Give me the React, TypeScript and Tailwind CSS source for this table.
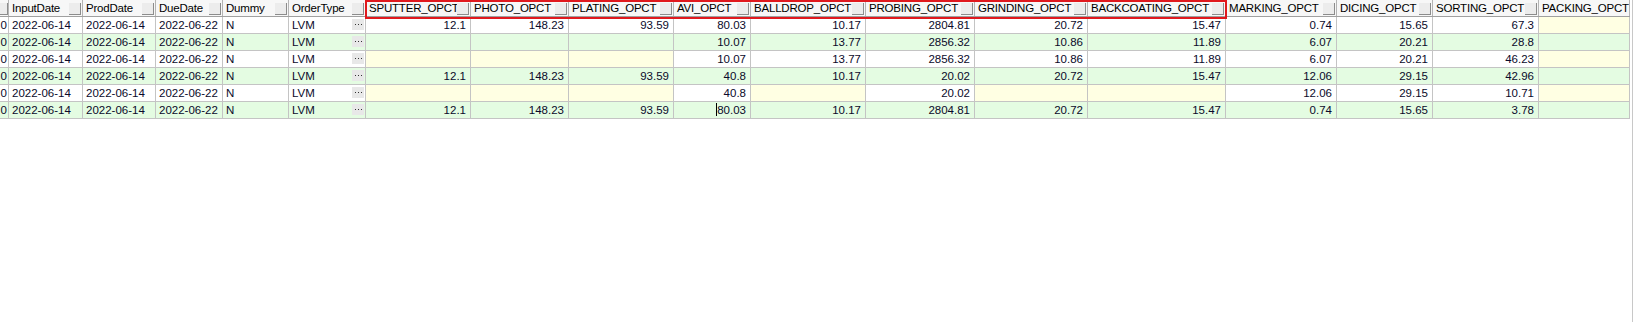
import React from "react";

type Col = { name: string; w: number };

const cols: Col[] = [
	{ name: "", w: 9 },
	{ name: "InputDate", w: 74 },
	{ name: "ProdDate", w: 73 },
	{ name: "DueDate", w: 67 },
	{ name: "Dummy", w: 66 },
	{ name: "OrderType", w: 77 },
	{ name: "SPUTTER_OPCT", w: 105 },
	{ name: "PHOTO_OPCT", w: 98 },
	{ name: "PLATING_OPCT", w: 105 },
	{ name: "AVI_OPCT", w: 77 },
	{ name: "BALLDROP_OPCT", w: 115 },
	{ name: "PROBING_OPCT", w: 109 },
	{ name: "GRINDING_OPCT", w: 113 },
	{ name: "BACKCOATING_OPCT", w: 138 },
	{ name: "MARKING_OPCT", w: 111 },
	{ name: "DICING_OPCT", w: 96 },
	{ name: "SORTING_OPCT", w: 106 },
	{ name: "PACKING_OPCT", w: 91 },
];

const rows: string[][] = [
	["12.1", "148.23", "93.59", "80.03", "10.17", "2804.81", "20.72", "15.47", "0.74", "15.65", "67.3", ""],
	["", "", "", "10.07", "13.77", "2856.32", "10.86", "11.89", "6.07", "20.21", "28.8", ""],
	["", "", "", "10.07", "13.77", "2856.32", "10.86", "11.89", "6.07", "20.21", "46.23", ""],
	["12.1", "148.23", "93.59", "40.8", "10.17", "20.02", "20.72", "15.47", "12.06", "29.15", "42.96", ""],
	["", "", "", "40.8", "", "20.02", "", "", "12.06", "29.15", "10.71", ""],
	["12.1", "148.23", "93.59", "80.03", "10.17", "2804.81", "20.72", "15.47", "0.74", "15.65", "3.78", ""],
];

const HeadBtn = () => (
	<div className="absolute right-[1px] top-[3px] w-[12px] h-[12px] bg-[#ececec] border-b border-r border-[#8c8c8c]" />
);

// little "..." button in the OrderType cells
const DotsBtn = () => (
	<div className="absolute right-[1px] top-[2px] w-[12px] h-[11px] bg-[#e8e8e8] flex items-center justify-center gap-[2px]">
		<div className="w-px h-px bg-[#333]" />
		<div className="w-px h-px bg-[#333]" />
		<div className="w-px h-px bg-[#333]" />
	</div>
);

const App = () => {
	return (
		<div
			className="relative w-[1645px] h-[322px] bg-white overflow-hidden text-[11.5px] text-black"
			style={{ fontFamily: '"Liberation Sans", Arial, sans-serif' }}
		>
			<div className="flex">
				<div className="flex flex-col">
					{/* header */}
					<div className="flex h-[17px] bg-[#f7f7f7] border-b border-[#a0a0a0]">
						{cols.map((c, i) => (
							<div
								key={i}
								style={{ width: c.w }}
								className="relative h-full border-r border-[#b4b4b4] pl-[3px] leading-[16px] tracking-[-0.2px] whitespace-nowrap overflow-hidden"
							>
								{c.name}
								{i < cols.length - 1 && <HeadBtn />}
								{i === 0 && (
									<div className="absolute left-0 top-[3px] w-[8px] h-[12px] bg-[#ececec] border-b border-r border-[#8c8c8c]" />
								)}
							</div>
						))}
					</div>

					{/* rows */}
					{rows.map((r, ri) => {
						const green = ri % 2 === 1;
						const rowBg = green ? "bg-[#e4fce2]" : "bg-white";
						const fixed = ["0", "2022-06-14", "2022-06-14", "2022-06-22", "N", "LVM"];
						return (
							<div key={ri} className={`flex h-[17px] border-b border-[#c4c4c4] ${rowBg}`}>
								{fixed.map((t, ci) => (
									<div
										key={ci}
										style={{ width: cols[ci].w }}
										className={`relative h-full border-r border-[#c4c4c4] leading-[16px] whitespace-nowrap overflow-hidden text-[#0a0a2a] ${ci === 0 ? "flex justify-end pr-[1px]" : "pl-[3px]"}`}
									>
										{t}
										{ci === 5 && <DotsBtn />}
									</div>
								))}
								{r.map((v, vi) => {
									const c = cols[vi + 6];
									const empty = v === "";
									const bg = empty && !green ? "bg-[#ffffe3]" : "";
									const caret = ri === 5 && vi === 3;
									return (
										<div
											key={vi}
											style={{ width: c.w }}
											className={`h-full border-r border-[#c4c4c4] leading-[16px] text-right pr-[4px] whitespace-nowrap text-[#0a0a2a] ${bg}`}
										>
											{caret && <span className="inline-block w-px h-[13px] bg-black align-[-2px]" />}
											{v}
										</div>
									);
								})}
							</div>
						);
					})}
				</div>
				<div className="w-[2px]" />
				<div className="w-px h-[322px] bg-[#c8c8c8]" />
			</div>

			{/* red highlight box */}
			<div className="absolute left-[365px] top-0 w-[862px] h-[19px] border-2 border-[#e0191e] pointer-events-none" />
		</div>
	);
};

export default App;
